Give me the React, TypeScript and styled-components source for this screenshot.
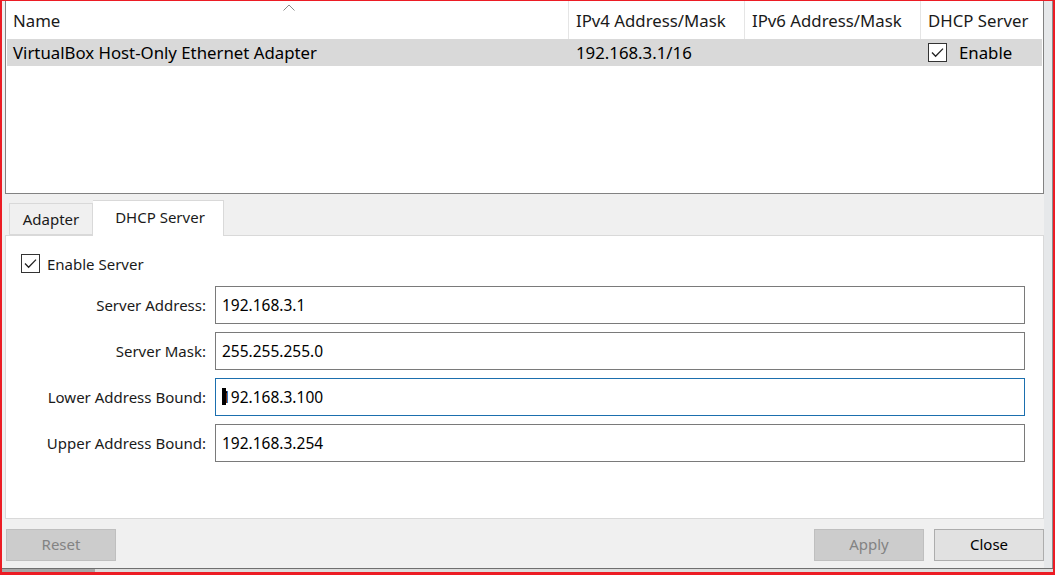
import React from "react";
import styled, { createGlobalStyle } from "styled-components";

const Global = createGlobalStyle`
  html, body { margin: 0; padding: 0; background: #f0f0f0; }
  * { box-sizing: border-box; }
  body { font-family: "Noto Sans", "Open Sans", sans-serif; font-size: 15px; color: #000; }
`;

const Frame = styled.div`
  width: 1055px;
  height: 575px;
  border-style: solid;
  border-color: #ec1c24;
  border-width: 1px 2px 3px 2px;
  display: flex;
  flex-direction: column;
  background: #f0f0f0;
  overflow: hidden;
`;

const Body = styled.div`
  flex: 1;
  display: flex;
  min-height: 0;
`;

const Main = styled.div`
  width: 1042px;
  display: flex;
  flex-direction: column;
`;

const Strip = styled.div`
  flex: 1;
  background: #e6e8ea;
  border-right: 1px solid #8e8e8e;
`;

const BottomBand = styled.div`
  height: 4px;
  border-top: 1px solid #6f6f6f;
  background: #dcdcdc;
  display: flex;
`;

const BandThumb = styled.div`
  width: 93px;
  background: #a6a6a6;
`;

const ListPanel = styled.div`
  margin-left: 3px;
  height: 193px;
  background: #fff;
  border: 1px solid #828282;
  border-top: none;
  display: flex;
  flex-direction: column;
  font-size: 16.8px;
`;

const HeaderRow = styled.div`
  display: flex;
  height: 38px;
`;

const HeaderCell = styled.div<{ $w?: number }>`
  position: relative;
  ${(p) => (p.$w ? `width: ${p.$w}px;` : "flex: 1;")}
  border-right: ${(p) => (p.$w ? "1px solid #e5e5e5" : "none")};
  padding: 0 0 0 7px;
  display: flex;
  align-items: center;
  white-space: nowrap;
  color: #1a1a1a;
`;

const SortArrow = styled.svg`
  position: absolute;
  left: 276px;
  top: 2px;
`;

const DataRow = styled.div<{ $selected?: boolean }>`
  display: flex;
  height: 27px;
  margin: 0 1px;
  background: ${(p) => (p.$selected ? "#d9d9d9" : "transparent")};
`;

const DataCell = styled.div<{ $w?: number }>`
  ${(p) => (p.$w ? `width: ${p.$w}px;` : "flex: 1;")}
  padding-left: ${(p) => (p.$w === 562 ? 6 : 7)}px;
  padding-bottom: 1px;
  display: flex;
  align-items: center;
  gap: 12px;
  white-space: nowrap;
`;

const Box = styled.span`
  width: 19px;
  height: 19px;
  border: 1px solid #333;
  background: #fff;
  display: inline-flex;
  align-items: center;
  justify-content: center;
  flex: none;
`;

const Check = () => (
  <Box>
    <svg width="15" height="15" viewBox="0 0 15 15">
      <path d="M2 7.5 L5.6 11.2 L13 3.6" fill="none" stroke="#222" strokeWidth="1.3" />
    </svg>
  </Box>
);

const TabBar = styled.div`
  margin-top: 6px;
  height: 35px;
  display: flex;
  align-items: flex-end;
  padding-left: 7px;
  position: relative;
  z-index: 1;
`;

const Tab = styled.div<{ $active?: boolean }>`
  height: ${(p) => (p.$active ? 36 : 32)}px;
  margin-bottom: ${(p) => (p.$active ? -1 : 0)}px;
  width: ${(p) => (p.$active ? 131 : 84)}px;
  background: ${(p) => (p.$active ? "#fff" : "#f0f0f0")};
  border: 1px solid #d9d9d9;
  border-bottom: ${(p) => (p.$active ? "none" : "1px solid #d9d9d9")};
  border-left: ${(p) => (p.$active ? "none" : "1px solid #d9d9d9")};
  display: flex;
  align-items: center;
  justify-content: center;
  padding-bottom: ${(p) => (p.$active ? 4 : 1)}px;
  padding-left: ${(p) => (p.$active ? 4 : 0)}px;
  color: #1a1a1a;
`;

const TabPanel = styled.div`
  margin-left: 3px;
  height: 284px;
  background: #fff;
  border: 1px solid #d9d9d9;
  padding: 16px 18px 0 0;
`;

const EnableRow = styled.div`
  height: 24px;
  margin-left: 15px;
  display: flex;
  align-items: center;
  gap: 7px;
  padding-bottom: 1px;
  color: #1a1a1a;
`;

const Form = styled.div`
  margin-top: 10px;
  display: grid;
  grid-template-columns: 200px 1fr;
  grid-auto-rows: 38px;
  column-gap: 9px;
  row-gap: 8px;
`;

const Label = styled.div`
  display: flex;
  align-items: center;
  justify-content: flex-end;
  white-space: nowrap;
  padding-bottom: 1px;
  color: #1a1a1a;
`;

const Field = styled.div<{ $focused?: boolean }>`
  border: 1px solid ${(p) => (p.$focused ? "#1b6fae" : "#7a7a7a")};
  background: #fff;
  display: flex;
  align-items: center;
  padding-left: 6px;
  padding-bottom: 1px;
  font-size: 15.5px;
`;

const Caret = styled.span`
  display: inline-block;
  width: 4px;
  height: 17px;
  background: #000;
  margin-right: -4px;
  position: relative;
  z-index: 1;
`;

const ButtonRow = styled.div`
  margin-top: 10px;
  height: 32px;
  padding-left: 4px;
  display: flex;
  gap: 10px;
`;

const Spacer = styled.div`
  flex: 1;
`;

const Button = styled.div<{ $disabled?: boolean }>`
  width: 110px;
  height: 32px;
  background: ${(p) => (p.$disabled ? "#cccccc" : "#e1e1e1")};
  border: 1px solid ${(p) => (p.$disabled ? "#bfbfbf" : "#adadad")};
  color: ${(p) => (p.$disabled ? "#838383" : "#000")};
  display: flex;
  align-items: center;
  justify-content: center;
  padding-bottom: 2px;
`;

const fields = [
  { label: "Server Address:", value: "192.168.3.1" },
  { label: "Server Mask:", value: "255.255.255.0" },
  { label: "Lower Address Bound:", value: "192.168.3.100", focused: true },
  { label: "Upper Address Bound:", value: "192.168.3.254" },
];

export default function App() {
  return (
    <>
      <Global />
      <Frame>
        <Body>
          <Main>
            <ListPanel>
              <HeaderRow>
                <HeaderCell $w={563}>
                  <SortArrow width="14" height="9" viewBox="0 0 14 9">
                    <path d="M1.5 7.5 L7 2 L12.5 7.5" fill="none" stroke="#8a8a8a" strokeWidth="1" />
                  </SortArrow>
                  Name
                </HeaderCell>
                <HeaderCell $w={176}>IPv4 Address/Mask</HeaderCell>
                <HeaderCell $w={176}>IPv6 Address/Mask</HeaderCell>
                <HeaderCell>DHCP Server</HeaderCell>
              </HeaderRow>
              <DataRow $selected>
                <DataCell $w={562}>VirtualBox Host-Only Ethernet Adapter</DataCell>
                <DataCell $w={176}>192.168.3.1/16</DataCell>
                <DataCell $w={176}></DataCell>
                <DataCell>
                  <Check />
                  Enable
                </DataCell>
              </DataRow>
            </ListPanel>
            <TabBar>
              <Tab>Adapter</Tab>
              <Tab $active>DHCP Server</Tab>
            </TabBar>
            <TabPanel>
              <EnableRow>
                <Check />
                Enable Server
              </EnableRow>
              <Form>
                {fields.map((f) => (
                  <React.Fragment key={f.label}>
                    <Label>{f.label}</Label>
                    <Field $focused={f.focused}>
                      {f.focused && <Caret />}
                      {f.value}
                    </Field>
                  </React.Fragment>
                ))}
              </Form>
            </TabPanel>
            <ButtonRow>
              <Button $disabled>Reset</Button>
              <Spacer />
              <Button $disabled>Apply</Button>
              <Button>Close</Button>
            </ButtonRow>
          </Main>
          <Strip />
        </Body>
        <BottomBand>
          <BandThumb />
        </BottomBand>
      </Frame>
    </>
  );
}
